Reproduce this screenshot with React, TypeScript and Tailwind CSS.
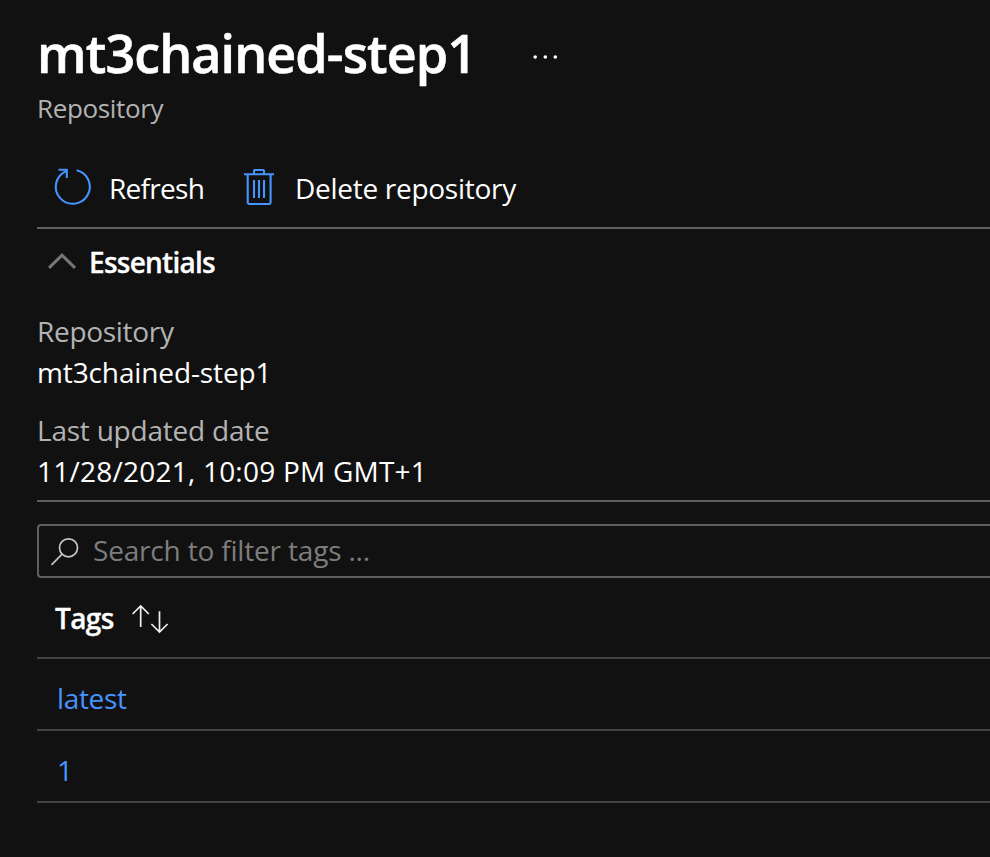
const tags = ['latest', '1'];

function RefreshIcon() {
  return (
    <svg className="mb-0.5 block h-9 w-9 shrink-0 overflow-visible" viewBox="0 0 36 36" fill="none" stroke="#4894fe" strokeWidth="2.1">
      <path d="M22.6 1.2A17 17 0 1 1 12.2 2.1" />
      <path d="M4.5 0.8H12.8V9" />
    </svg>
  );
}

function TrashIcon() {
  return (
    <svg className="mb-0.5 block h-9 w-[30px] shrink-0 overflow-visible" viewBox="0 0 30 36" fill="none" stroke="#4894fe" strokeWidth="2.1">
      <path d="M0 5.3H30M10 5V1.8Q10 1 10.8 1H19.2Q20 1 20 1.8V5" />
      <path d="M3.7 5.5V33.6Q3.7 35 5.1 35H25.2Q26.6 35 26.6 33.6V5.5" />
      <path d="M10 11V29M15 11V29M20 11V29" />
    </svg>
  );
}

function SearchIcon() {
  return (
    <svg className="mt-0.5 block h-7 w-7 shrink-0 overflow-visible" viewBox="0 0 28 28" fill="none" stroke="#c8c6c4" strokeWidth="1.7">
      <circle cx="17.5" cy="9.8" r="9" />
      <path d="M11.1 16.2L0.5 26.9" />
    </svg>
  );
}

function SortIcon() {
  return (
    <svg className="mt-0.5 block h-7 w-9 shrink-0 overflow-visible" viewBox="0 0 36 28" fill="none" stroke="#f0f0f0" strokeWidth="1.7">
      <path d="M8.7 22V1.2M0.6 9L8.7 1L16.8 9" />
      <path d="M27.5 6.2V27M19.4 19L27.5 27L35.6 19" />
    </svg>
  );
}

export default function App() {
  return (
    <main className="flex h-[857px] w-full flex-col overflow-hidden bg-[#111111] pl-[37px] pt-[17px] font-['Open_Sans','Noto_Sans',sans-serif] text-[28px] text-white">
      <header className="mb-[22px] flex flex-col">
        <div className="flex h-[72px] items-center">
          <h1 className="w-[496px] whitespace-nowrap text-[52px] font-semibold leading-[72px] tracking-[-0.9px] [-webkit-text-stroke:0.6px_#ffffff]">mt3chained-step1</h1>
          <svg className="mt-[7px] block h-1 w-6 overflow-visible" viewBox="0 0 24 4" fill="#ffffff">
            <circle cx="2.2" cy="2" r="1.8" />
            <circle cx="12.3" cy="2" r="1.8" />
            <circle cx="22.3" cy="2" r="1.8" />
          </svg>
        </div>
        <p className="h-[38px] text-[26px] leading-[38px] tracking-[-0.35px] text-[#b3b3b3]">Repository</p>
      </header>

      <nav className="flex h-20 items-center border-b-2 border-[#605f5f] pl-[17px]">
        <button className="flex w-[190px] items-center gap-[19px]">
          <RefreshIcon />
          <span className="leading-[40px] tracking-[-0.7px]">Refresh</span>
        </button>
        <button className="flex items-center gap-[21px] whitespace-nowrap">
          <TrashIcon />
          <span className="leading-[40px] tracking-[-0.28px]">Delete repository</span>
        </button>
      </nav>

      <section className="flex flex-col border-b-2 border-[#605f5f] pb-2">
        <div className="mb-4 flex h-[66px] items-center gap-[13px] pl-[11px]">
          <svg className="mb-0.5 block h-4 w-7 shrink-0" viewBox="0 0 28 16" fill="none" stroke="#797775" strokeWidth="3">
            <path d="M1 14.8L14 2.2L27 14.8" />
          </svg>
          <h2 className="font-semibold leading-[40px] tracking-[-0.75px] [-webkit-text-stroke:0.3px_#ffffff]">Essentials</h2>
        </div>
        <dl className="leading-[41px]">
          <dt className="tracking-[-0.3px] text-[#b3b3b3]">Repository</dt>
          <dd className="mb-[17px] tracking-[-0.12px]">mt3chained-step1</dd>
          <dt className="tracking-[-0.22px] text-[#b3b3b3]">Last updated date</dt>
          <dd className="tracking-[0.23px]">11/28/2021, 10:09 PM GMT+1</dd>
        </dl>
      </section>

      <div className="mt-[22px] flex h-[54px] shrink-0 items-center gap-[14px] rounded-l border-2 border-r-0 border-[#605f5f] pl-3">
        <SearchIcon />
        <span className="mb-0.5 leading-[40px] tracking-[-0.18px] text-[#7d7d7d]">Search to filter tags ...</span>
      </div>

      <div className="flex flex-col">
        <div className="flex h-[81px] items-center border-b-2 border-[#424242] pl-[18px]">
          <span className="w-[77px] font-semibold leading-[40px] tracking-[-0.6px] [-webkit-text-stroke:0.3px_#ffffff]">Tags</span>
          <SortIcon />
        </div>
        {tags.map((tag) => (
          <div key={tag} className="flex h-[72px] items-center border-b-2 border-[#424242] pl-5 pt-2">
            <a className="leading-[40px] tracking-[-0.35px] text-[#4894fe]">{tag}</a>
          </div>
        ))}
      </div>
    </main>
  );
}
